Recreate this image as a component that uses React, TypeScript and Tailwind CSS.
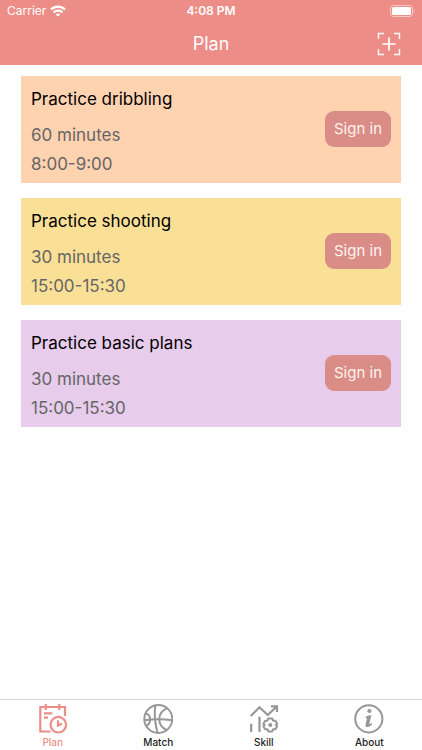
import React from 'react';

interface Plan {
  title: string;
  duration: string;
  time: string;
  color: string;
}

const plans: Plan[] = [
  { title: 'Practice dribbling', duration: '60 minutes', time: '8:00-9:00', color: 'bg-[#ffd2b0]' },
  { title: 'Practice shooting', duration: '30 minutes', time: '15:00-15:30', color: 'bg-[#fadf96]' },
  { title: 'Practice basic plans', duration: '30 minutes', time: '15:00-15:30', color: 'bg-[#e7cceb]' },
];

const iconProps = {
  viewBox: '0 0 30 30',
  fill: 'none',
  stroke: 'currentColor',
  strokeWidth: 2.2,
  className: 'h-[30px] w-[30px]',
  'aria-hidden': true,
};

const PlanIcon: React.FC = () => (
  <svg {...iconProps}>
    <path d="M12.5 27.5H2.3V3H27V12" />
    <path d="M7.8 0V6M21.3 0V6M6 9.3H14.3M6 13.7H10" />
    <circle cx="20.3" cy="20.7" r="7.8" />
    <path d="M20 16.3V21.6L24 19.8" />
  </svg>
);

const MatchIcon: React.FC = () => (
  <svg {...iconProps} strokeWidth={2}>
    <circle cx="15.3" cy="15" r="14" />
    <path d="M1.5 16.2Q15 14.4 29.2 16.2" />
    <path d="M12.2 1.5Q10.6 15 14.6 29" />
    <path d="M24.4 4.2C14 8.5 13.5 21 23.5 26" />
    <path d="M2.8 9.2C8.4 11 8.4 19.5 3.2 22" />
  </svg>
);

const SkillIcon: React.FC = () => (
  <svg {...iconProps}>
    <path d="M1.7 12L10.5 3.2L18.7 11L27.5 2.8" />
    <path d="M22 2.3H28V8" />
    <path d="M2.2 19.7V28M10.5 12.7V28" />
    <path
      strokeLinejoin="round"
      strokeWidth="2"
      d="M19.4 14.4H23.2L24.1 16.7H26.4L28.2 20L26.8 21L28.2 22.2L26.4 25.2H24.1L23.2 27.5H19.4L18.4 25.2H16.1L14.3 22.2L15.7 21L14.3 20L16.1 16.7H18.4Z"
    />
    <circle cx="21.3" cy="21" r="2" fill="currentColor" stroke="none" />
  </svg>
);

const AboutIcon: React.FC = () => (
  <svg {...iconProps} strokeWidth={2}>
    <circle cx="14.8" cy="14.8" r="13.6" />
    <circle cx="15.4" cy="7" r="2.1" fill="currentColor" stroke="none" />
    <path
      fill="currentColor"
      stroke="none"
      d="M11.4 13.1C12.8 11.9 15 11 17.4 11.2L15.4 19.6C15.2 20.6 16.4 20.1 17.9 19L18.1 20.4C16.5 22 14.5 23.2 12.8 22.9C11.3 22.6 11.3 21.2 11.6 20L13 14.6C13 13.8 12.3 14.1 11.5 14.5Z"
    />
  </svg>
);

const tabs = [
  { label: 'Plan', Icon: PlanIcon },
  { label: 'Match', Icon: MatchIcon },
  { label: 'Skill', Icon: SkillIcon },
  { label: 'About', Icon: AboutIcon },
];

const StatusBar: React.FC = () => (
  <div className="grid h-[22px] grid-cols-3 items-center px-[7px] text-xs leading-4">
    <div className="flex items-center gap-1">
      <span>Carrier</span>
      <svg viewBox="0 0 16 12" className="h-3 w-4" fill="none" stroke="currentColor" strokeWidth="2.3" aria-hidden>
        <path d="M1 4.5C5 .6 11 .6 15 4.5M3.6 7.4C6 5 10 5 12.4 7.4" />
        <path d="M8 11.6L5.7 9.4C7 8.2 9 8.2 10.3 9.4Z" fill="currentColor" stroke="none" />
      </svg>
    </div>
    <span className="text-center font-semibold">4:08 PM</span>
    <svg viewBox="0 0 25 12" className="h-3 w-[25px] justify-self-end" aria-hidden>
      <rect x=".5" y=".5" width="22" height="11" rx="3" fill="none" stroke="#fff" strokeOpacity=".5" />
      <rect x="2" y="2" width="19" height="8" rx="1.6" fill="#fff" />
      <path d="M23.6 4.2Q25.4 6 23.6 7.8Z" fill="#fff" fillOpacity=".6" />
    </svg>
  </div>
);

const PlanCard: React.FC<{ plan: Plan }> = ({ plan }) => (
  <li className={`flex items-center justify-between px-[10px] pt-[9px] pb-[3px] ${plan.color}`}>
    <div className="text-[17px]">
      <h2 className="mb-2 leading-7 text-black">{plan.title}</h2>
      <p className="leading-7 text-[#666]">{plan.duration}</p>
      <p className="leading-[31px] text-[#666]">{plan.time}</p>
    </div>
    <button
      type="button"
      className="-mt-2 h-9 w-[66px] rounded-[9px] bg-[#da8d87] pt-0.5 text-[15px] text-[#fff3ee]"
    >
      Sign in
    </button>
  </li>
);

const App: React.FC = () => {
  return (
    <div className="flex min-h-screen flex-col bg-white font-['Inter','Liberation_Sans',sans-serif]">
      <header className="bg-[#ec8e87] text-white">
        <StatusBar />
        <div className="grid h-[43px] grid-cols-3 items-center px-[21px]">
          <h1 className="col-start-2 text-center text-lg">Plan</h1>
          <button type="button" aria-label="Add plan" className="justify-self-end">
            <svg viewBox="0 0 24 24" className="h-6 w-6" fill="none" stroke="currentColor" strokeWidth="1.4" aria-hidden>
              <path d="M1.5 7V1.5H7M17 1.5H22.5V7M22.5 17V22.5H17M7 22.5H1.5V17" />
              <path d="M12 5.5V18.5M5.5 12H18.5" strokeWidth="1.7" />
            </svg>
          </button>
        </div>
      </header>

      <main className="flex-1 px-[21px] pt-[11px]">
        <ul className="flex flex-col gap-[15px]">
          {plans.map((plan) => (
            <PlanCard key={plan.title} plan={plan} />
          ))}
        </ul>
      </main>

      <nav className="grid grid-cols-4 border-t border-[#d8d8d8] pt-1">
        {tabs.map(({ label, Icon }) => {
          const active = label === 'Plan';
          return (
            <button
              key={label}
              type="button"
              aria-current={active ? 'page' : undefined}
              className={`flex flex-col items-center ${active ? 'text-[#ec8e87]' : 'text-[#979797]'}`}
            >
              <Icon />
              <span className={`text-[10px] leading-4 font-medium ${active ? '' : 'text-[#222]'}`}>{label}</span>
            </button>
          );
        })}
      </nav>
    </div>
  );
};

export default App;
